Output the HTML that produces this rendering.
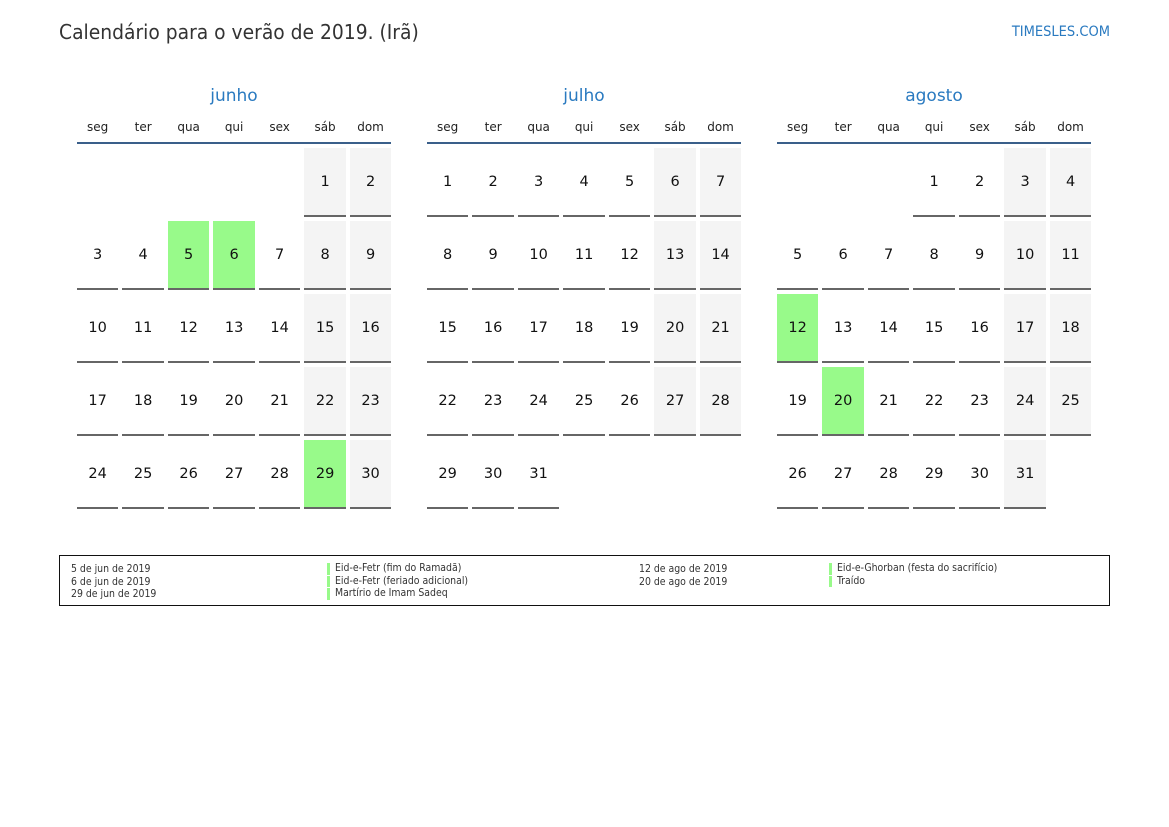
<!DOCTYPE html>
<html><head><meta charset="utf-8"><style>
body{margin:0;width:1169px;height:827px;background:#fff;font-family:"DejaVu Sans","Liberation Sans",sans-serif;position:relative;overflow:hidden}
.title{position:absolute;left:59px;top:20px;font-size:20.8px;color:#333;font-family:"DejaVu Sans Condensed","DejaVu Sans",sans-serif}
.logo{position:absolute;right:59px;top:24px;font-size:14.5px;color:#2a7ac0;font-family:"DejaVu Sans Condensed","DejaVu Sans",sans-serif}
.m{position:absolute;top:86px;width:314px}
.mn{text-align:center;font-size:17px;color:#2a7ac0;height:22px}
.hd{display:grid;grid-template-columns:repeat(7,41.3px);column-gap:4.2px;font-size:12px;color:#222;text-align:center;margin-top:12px;height:22px;border-bottom:2px solid #3a5f8a}
.g{display:grid;grid-template-columns:repeat(7,41.3px);column-gap:4.2px;row-gap:3px;margin-top:4px}
.g div{height:67px;line-height:68px;text-align:center;font-size:14.5px;color:#111;border-bottom:2px solid #666}
.g .e{border-bottom:2px solid transparent}
.g .w{background:#f4f4f4}
.g .h{background:#98fa8a}
.g div{margin-bottom:1px}
.leg{position:absolute;left:59px;top:555px;width:1049px;height:49px;border:1px solid #111;font-size:10.4px;color:#333;line-height:12.5px;font-family:"DejaVu Sans Condensed","DejaVu Sans",sans-serif}
.c{position:absolute;top:7px}
.b{border-left:3px solid #98fa8a;padding-left:5px;margin-bottom:1px;line-height:11.5px}
</style></head><body>
<div class="title">Calendário para o verão de 2019. (Irã)</div>
<div class="logo">TIMESLES.COM</div>

<div class="m" style="left:77px"><div class="mn">junho</div>
<div class="hd"><span>seg</span><span>ter</span><span>qua</span><span>qui</span><span>sex</span><span>sáb</span><span>dom</span></div>
<div class="g">
<div class="e"></div><div class="e"></div><div class="e"></div><div class="e"></div><div class="e"></div><div class="w">1</div><div class="w">2</div>
<div>3</div><div>4</div><div class="h">5</div><div class="h">6</div><div>7</div><div class="w">8</div><div class="w">9</div>
<div>10</div><div>11</div><div>12</div><div>13</div><div>14</div><div class="w">15</div><div class="w">16</div>
<div>17</div><div>18</div><div>19</div><div>20</div><div>21</div><div class="w">22</div><div class="w">23</div>
<div>24</div><div>25</div><div>26</div><div>27</div><div>28</div><div class="h">29</div><div class="w">30</div>
</div></div>

<div class="m" style="left:427px"><div class="mn">julho</div>
<div class="hd"><span>seg</span><span>ter</span><span>qua</span><span>qui</span><span>sex</span><span>sáb</span><span>dom</span></div>
<div class="g">
<div>1</div><div>2</div><div>3</div><div>4</div><div>5</div><div class="w">6</div><div class="w">7</div>
<div>8</div><div>9</div><div>10</div><div>11</div><div>12</div><div class="w">13</div><div class="w">14</div>
<div>15</div><div>16</div><div>17</div><div>18</div><div>19</div><div class="w">20</div><div class="w">21</div>
<div>22</div><div>23</div><div>24</div><div>25</div><div>26</div><div class="w">27</div><div class="w">28</div>
<div>29</div><div>30</div><div>31</div><div class="e"></div><div class="e"></div><div class="e"></div><div class="e"></div>
</div></div>

<div class="m" style="left:777px"><div class="mn">agosto</div>
<div class="hd"><span>seg</span><span>ter</span><span>qua</span><span>qui</span><span>sex</span><span>sáb</span><span>dom</span></div>
<div class="g">
<div class="e"></div><div class="e"></div><div class="e"></div><div>1</div><div>2</div><div class="w">3</div><div class="w">4</div>
<div>5</div><div>6</div><div>7</div><div>8</div><div>9</div><div class="w">10</div><div class="w">11</div>
<div class="h">12</div><div>13</div><div>14</div><div>15</div><div>16</div><div class="w">17</div><div class="w">18</div>
<div>19</div><div class="h">20</div><div>21</div><div>22</div><div>23</div><div class="w">24</div><div class="w">25</div>
<div>26</div><div>27</div><div>28</div><div>29</div><div>30</div><div class="w">31</div><div class="e"></div>
</div></div>

<div class="leg">
<div class="c" style="left:11px">5 de jun de 2019<br>6 de jun de 2019<br>29 de jun de 2019</div>
<div class="c" style="left:267px"><div class="b">Eid-e-Fetr (fim do Ramadã)</div><div class="b">Eid-e-Fetr (feriado adicional)</div><div class="b">Martírio de Imam Sadeq</div></div>
<div class="c" style="left:579px">12 de ago de 2019<br>20 de ago de 2019</div>
<div class="c" style="left:769px"><div class="b">Eid-e-Ghorban (festa do sacrifício)</div><div class="b">Traído</div></div>
</div>
</body></html>
